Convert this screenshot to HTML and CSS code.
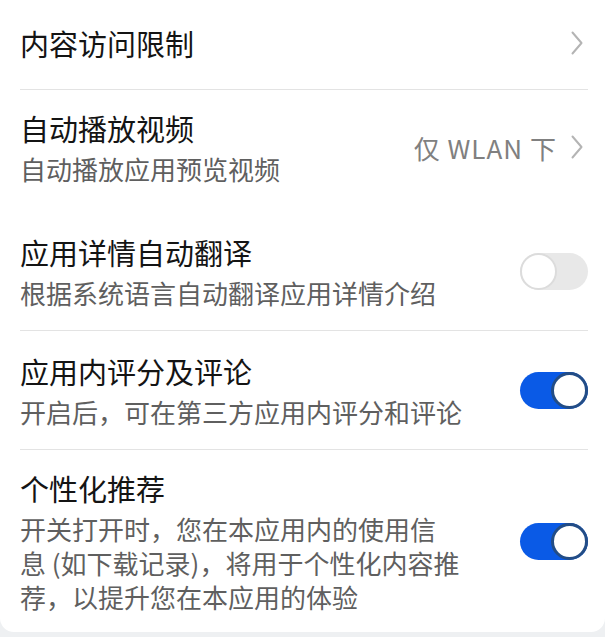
FILE: index.html
```html
<!DOCTYPE html>
<html lang="zh-CN">
<head>
    <meta charset="UTF-8">
    <meta name="viewport" content="width=device-width, initial-scale=1.0">
    <title>设置</title>
    <link rel="stylesheet" href="styles.css">
</head>
<body>

<div class="card">
    <div class="row single">
        <div class="text">
            <div class="title">内容访问限制</div>
        </div>
        <div class="side">
            <svg class="chevron" viewBox="0 0 12 24"><path d="M1.5 1.5 L10.5 12 L1.5 22.5"/></svg>
        </div>
    </div>

    <div class="row no-line">
        <div class="text">
            <div class="title">自动播放视频</div>
            <div class="sub">自动播放应用预览视频</div>
        </div>
        <div class="side">
            <span class="value">仅 WLAN 下</span>
            <svg class="chevron" viewBox="0 0 12 24"><path d="M1.5 1.5 L10.5 12 L1.5 22.5"/></svg>
        </div>
    </div>

    <div class="row">
        <div class="text">
            <div class="title">应用详情自动翻译</div>
            <div class="sub">根据系统语言自动翻译应用详情介绍</div>
        </div>
        <div class="side">
            <div class="switch"><div class="knob"></div></div>
        </div>
    </div>

    <div class="row">
        <div class="text">
            <div class="title">应用内评分及评论</div>
            <div class="sub">开启后，可在第三方应用内评分和评论</div>
        </div>
        <div class="side">
            <div class="switch on"><div class="knob"></div></div>
        </div>
    </div>

    <div class="row last">
        <div class="text">
            <div class="title">个性化推荐</div>
            <div class="sub">开关打开时，您在本应用内的使用信<br>息 (如下载记录)，将用于个性化内容推<br>荐，以提升您在本应用的体验</div>
        </div>
        <div class="side">
            <div class="switch on"><div class="knob"></div></div>
        </div>
    </div>
</div>

</body>
</html>
```

FILE: styles.css
```css
* {box-sizing: border-box; margin: 0; padding: 0;}
body {background-color: #eef0f2; font-family: "Noto Sans CJK SC", "Noto Sans", sans-serif; width: 605px; height: 637px; overflow: hidden;}
.card {background-color: #fff; padding: 0 17px 0 20px; border-radius: 0 0 14px 14px; height: 632px;}
.row {display: flex; align-items: center; justify-content: space-between; padding: 20px 0; border-bottom: 1px solid #e3e3e3;}
.row.single {padding: 23px 0 26px;}
.row.no-line {border-bottom: none; padding: 18px 0 26px;}
.row.last {border-bottom: none; padding-top: 18px;}
.text {flex: 1;}
.title {font-size: 29px; line-height: 40px; color: #141414;}
.sub {font-size: 26px; line-height: 34px; color: #5f5f5f; margin-top: 4px;}
.side {display: flex; align-items: center; gap: 14px;}
.value {font-size: 26px; letter-spacing: 1px; color: #808080;}
.chevron {width: 12px; height: 24px; margin-right: 5px;}
.chevron path {fill: none; stroke: #b4b4b4; stroke-width: 2; stroke-linecap: round; stroke-linejoin: round;}
.switch {width: 68px; height: 37px; border-radius: 19px; background-color: #e8e8e8; display: flex; align-items: center; justify-content: flex-start;}
.switch .knob {width: 37px; height: 37px; border-radius: 50%; background-color: #fff; border: 2px solid #dcdcdc;}
.switch.on {background-color: #0a5ae6; justify-content: flex-end;}
.switch.on .knob {border: 3px solid #234d86;}
```
